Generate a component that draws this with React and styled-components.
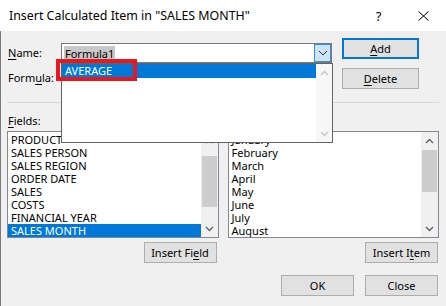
import React from 'react';
import styled, { createGlobalStyle } from 'styled-components';

const FONT = `"Noto Sans", "Open Sans", sans-serif`;

const GlobalStyle = createGlobalStyle`
  html, body { margin: 0; padding: 0; background: #f0f0f0; }
  body { font-family: ${FONT}; font-size: 11px; color: #000; }
  * { box-sizing: border-box; }
`;

const Window = styled.div`
  position: relative;
  width: 446px;
  height: 306px;
  display: flex;
  flex-direction: column;
  background: #f0f0f0;
  overflow: hidden;
`;

const TitleBar = styled.div`
  height: 31px;
  background: #fff;
  display: flex;
  align-items: center;
  padding-left: 9px;
`;

const Title = styled.div`
  flex: 1;
  font-size: 12.4px;
  color: #000;
  white-space: nowrap;
`;

const TitleButton = styled.div`
  width: 45px;
  height: 31px;
  display: flex;
  align-items: center;
  justify-content: center;
  font-size: 13px;
  color: #000;
`;

const Body = styled.div`
  flex: 1;
  border-left: 1px solid #7a7a7a;
  padding: 7px 7px 0 6px;
  display: flex;
  flex-direction: column;
`;

const TopSection = styled.div`
  display: flex;
  align-items: flex-start;
`;

const FormColumn = styled.div`
  width: 325px;
  display: flex;
  flex-direction: column;
  gap: 5px;
  padding-top: 5px;
`;

const FieldRow = styled.div`
  display: flex;
  align-items: center;
  height: 20px;
`;

const Label = styled.div`
  width: ${(p) => p.$width || 'auto'};
  font-size: 11px;
  line-height: 16px;
  padding-left: 1px;
  white-space: nowrap;
`;

const Mn = styled.span`
  text-decoration: underline;
  text-underline-offset: 2px;
`;

const Combo = styled.div`
  width: 271px;
  height: 20px;
  background: #fff;
  border: 1px solid #7a7a7a;
  display: flex;
  align-items: center;
  padding-left: 2px;
`;

const ComboText = styled.span`
  flex: 1;
  display: flex;
`;

const Selected = styled.span`
  background: #c8c8c8;
  line-height: 15px;
  padding: 0 1px;
`;

const ComboButton = styled.div`
  width: 17px;
  height: 18px;
  background: #cce4f7;
  border: 1px solid #3d8fd6;
  display: flex;
  align-items: center;
  justify-content: center;
`;

const TextInput = styled.div`
  width: 271px;
  height: 20px;
  background: #fff;
  border: 1px solid #7a7a7a;
`;

const ButtonColumn = styled.div`
  margin-left: 10px;
  display: flex;
  flex-direction: column;
  gap: 9px;
`;

const Button = styled.div`
  width: ${(p) => p.$width || 73}px;
  height: 21px;
  background: #e1e1e1;
  border: ${(p) => (p.$default ? '2px solid #0078d7' : '1px solid #adadad')};
  display: flex;
  align-items: center;
  justify-content: center;
  font-size: 11px;
  color: #000;
  white-space: nowrap;
`;

const Separator = styled.div`
  height: 1px;
  background: #d9d9d9;
  margin-top: 13px;
`;

const ListsSection = styled.div`
  display: flex;
  gap: 9px;
  margin-top: 10px;
`;

const ListColumn = styled.div`
  flex: 1;
  display: flex;
  flex-direction: column;
`;

const ListLabel = styled(Label)`
  margin-bottom: 2px;
`;

const ListBox = styled.div`
  height: 107px;
  border: 1px solid #828790;
  background: #fff;
  display: flex;
  overflow: hidden;
`;

const ListItems = styled.div`
  flex: 1;
  padding-top: 1px;
  overflow: hidden;
`;

const ListItem = styled.div`
  height: 13px;
  line-height: 13px;
  padding-left: 3px;
  font-size: 11px;
  white-space: nowrap;
  background: ${(p) => (p.$selected ? '#0078d7' : 'transparent')};
  color: ${(p) => (p.$selected ? '#fff' : '#000')};
`;

const ScrollBar = styled.div`
  width: 17px;
  background: #f0f0f0;
  display: flex;
  flex-direction: column;
`;

const ScrollArrow = styled.div`
  height: 17px;
  display: flex;
  align-items: center;
  justify-content: center;
`;

const ScrollTrack = styled.div`
  flex: 1;
  position: relative;
`;

const Thumb = styled.div`
  position: absolute;
  left: 1px;
  right: 1px;
  background: #cdcdcd;
`;

const ListButton = styled(Button)`
  align-self: flex-end;
  margin-top: 4px;
  margin-right: ${(p) => p.$mr || 1}px;
`;

const Footer = styled.div`
  display: flex;
  justify-content: flex-end;
  gap: 11px;
  margin-top: 12px;
  margin-right: 1px;
`;

const DropList = styled.div`
  position: absolute;
  left: 61px;
  top: 63px;
  width: 272px;
  height: 80px;
  background: #fff;
  border: 1px solid #646464;
  display: flex;
`;

const DropItems = styled.div`
  flex: 1;
`;

const DropItem = styled.div`
  height: 14px;
  line-height: 14px;
  padding-left: 3px;
  background: #0078d7;
  color: #fff;
  font-size: 11px;
`;

const DropScroll = styled.div`
  width: 16px;
  background: #f7f7f7;
  display: flex;
  flex-direction: column;
  justify-content: space-between;
`;

const RedBox = styled.div`
  position: absolute;
  left: 56px;
  top: 59px;
  width: 81px;
  height: 22px;
  border: 4px solid #e8161f;
`;

const Chevron = ({ up, color = '#606060' }) => (
  <svg width="9" height="6" viewBox="0 0 9 6">
    <path
      d={up ? 'M1 5 L4.5 1.5 L8 5' : 'M1 1 L4.5 4.5 L8 1'}
      fill="none"
      stroke={color}
      strokeWidth="1.3"
    />
  </svg>
);

const CloseIcon = () => (
  <svg width="11" height="10" viewBox="0 0 11 10">
    <path d="M0.5 0.5 L10.5 9.5 M10.5 0.5 L0.5 9.5" stroke="#000" strokeWidth="1" fill="none" />
  </svg>
);

const ComboChevron = () => (
  <svg width="10" height="6" viewBox="0 0 10 6">
    <path d="M1 1 L5 5 L9 1" fill="none" stroke="#333" strokeWidth="1" />
  </svg>
);

const fields = ['PRODUCT', 'SALES PERSON', 'SALES REGION', 'ORDER DATE', 'SALES', 'COSTS', 'FINANCIAL YEAR', 'SALES MONTH'];
const items = ['January', 'February', 'March', 'April', 'May', 'June', 'July', 'August'];

const List = ({ rows, selected, thumbTop, thumbHeight }) => (
  <ListBox>
    <ListItems>
      {rows.map((r) => (
        <ListItem key={r} $selected={r === selected}>{r}</ListItem>
      ))}
    </ListItems>
    <ScrollBar>
      <ScrollArrow><Chevron up /></ScrollArrow>
      <ScrollTrack>
        <Thumb style={{ top: thumbTop, height: thumbHeight }} />
      </ScrollTrack>
      <ScrollArrow><Chevron /></ScrollArrow>
    </ScrollBar>
  </ListBox>
);

export default function App() {
  return (
    <>
      <GlobalStyle />
      <Window>
        <TitleBar>
          <Title>Insert Calculated Item in "SALES MONTH"</Title>
          <TitleButton>?</TitleButton>
          <TitleButton><CloseIcon /></TitleButton>
        </TitleBar>
        <Body>
          <TopSection>
            <FormColumn>
              <FieldRow>
                <Label $width="54px"><Mn>N</Mn>ame:</Label>
                <Combo>
                  <ComboText><Selected>Formula1</Selected></ComboText>
                  <ComboButton><ComboChevron /></ComboButton>
                </Combo>
              </FieldRow>
              <FieldRow>
                <Label $width="54px">Form<Mn>u</Mn>la:</Label>
                <TextInput />
              </FieldRow>
            </FormColumn>
            <ButtonColumn>
              <Button $width={77} $default><Mn>A</Mn>dd</Button>
              <Button $width={77}><Mn>D</Mn>elete</Button>
            </ButtonColumn>
          </TopSection>
          <Separator />
          <ListsSection>
            <ListColumn>
              <ListLabel><Mn>F</Mn>ields:</ListLabel>
              <List rows={fields} selected="SALES MONTH" thumbTop={7} thumbHeight={51} />
              <ListButton $mr={2}>Insert Fi<Mn>e</Mn>ld</ListButton>
            </ListColumn>
            <ListColumn>
              <ListLabel><Mn>I</Mn>tems:</ListLabel>
              <List rows={items} thumbTop={1} thumbHeight={42} />
              <ListButton $mr={1}>Insert I<Mn>t</Mn>em</ListButton>
            </ListColumn>
          </ListsSection>
          <Footer>
            <Button>OK</Button>
            <Button>Close</Button>
          </Footer>
        </Body>
        <DropList>
          <DropItems>
            <DropItem>AVERAGE</DropItem>
          </DropItems>
          <DropScroll>
            <ScrollArrow><Chevron up color="#c4c4c4" /></ScrollArrow>
            <ScrollArrow><Chevron color="#c4c4c4" /></ScrollArrow>
          </DropScroll>
        </DropList>
        <RedBox />
      </Window>
    </>
  );
}
